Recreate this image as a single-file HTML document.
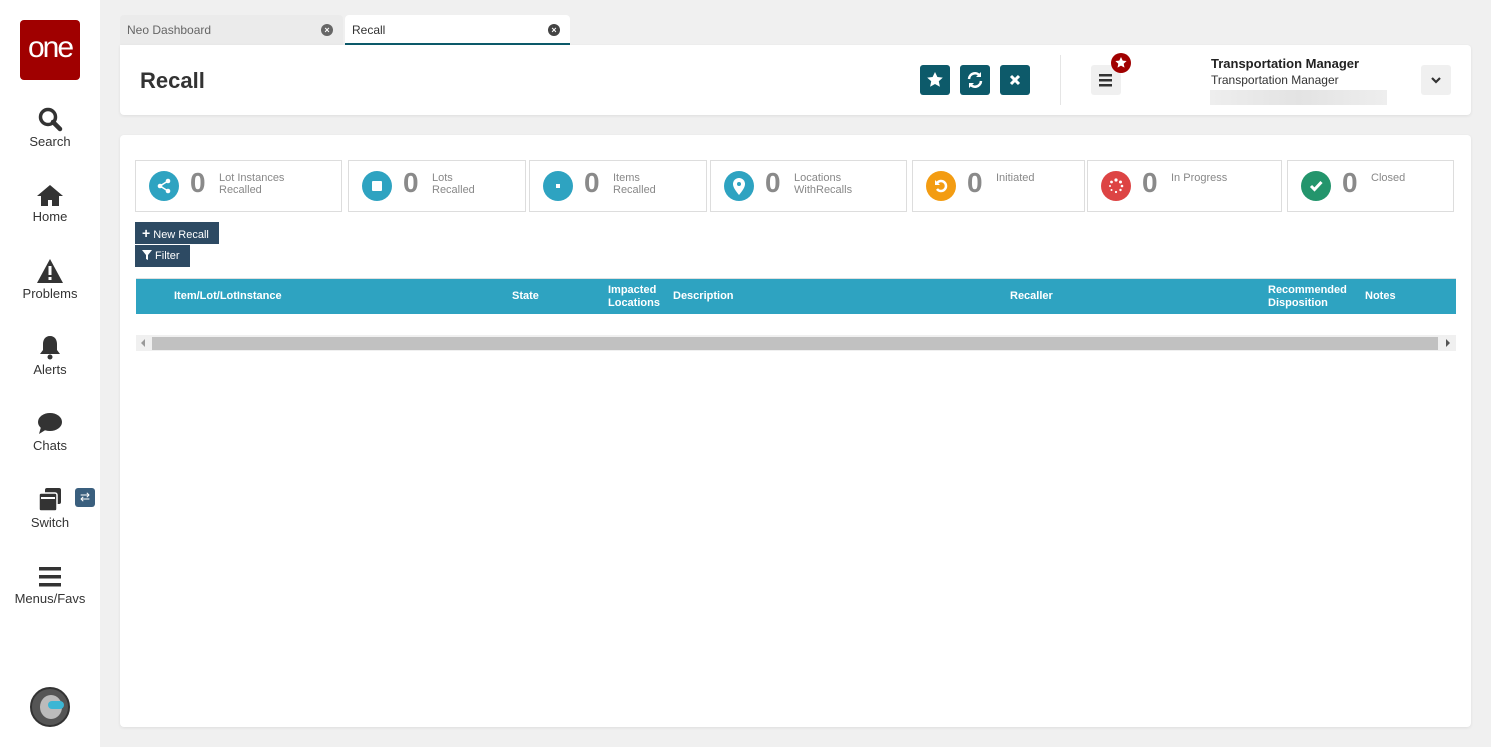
<!DOCTYPE html>
<html><head><style>
*{box-sizing:border-box;margin:0;padding:0}
body{width:1491px;height:747px;background:#f0f0f0;font-family:"Liberation Sans",sans-serif;position:relative;overflow:hidden;color:#333}
.abs{position:absolute}
#side{left:0;top:0;width:100px;height:747px;background:#fff}
.logo{left:20px;top:20px;width:60px;height:60px;background:#a00000;border-radius:4px;color:#fff;font-size:30px;text-align:center;line-height:56px;letter-spacing:-2px}
.nav{left:0;width:100px;text-align:center;font-size:13px;color:#333}
.nav svg{display:block;margin:0 auto 2px}
.tab{top:15px;height:30px;font-size:12px;line-height:30px;padding-left:7px;border-radius:4px 4px 0 0}
.x{position:absolute;right:10px;top:9px;width:12px;height:12px;border-radius:50%;background:#444;color:#fff;font-size:9px;line-height:12px;text-align:center;font-weight:bold}
.card{background:#fff;border-radius:4px;box-shadow:0 1px 3px rgba(0,0,0,.08)}
.btn{width:30px;height:30px;background:#0d5a6a;border-radius:3px;top:65px}
.stat{top:160px;height:52px;border:1px solid #ddd;background:#fff}
.stat .c{position:absolute;left:13px;top:10px;width:30px;height:30px;border-radius:50%}
.stat .n{position:absolute;left:54px;top:6px;font-size:28px;font-weight:bold;color:#8a8a8a}
.stat .t{position:absolute;left:83px;top:11px;font-size:11px;color:#888;line-height:12px}
.th{position:absolute;color:#fff;font-weight:bold;font-size:11px;line-height:13px}
</style></head><body>
<div id="side" class="abs"></div>
<div class="abs logo">one</div>
<div class="abs nav" style="top:106px"><svg width="26" height="26" viewBox="0 0 26 26"><circle cx="11" cy="11" r="7.5" fill="none" stroke="#333" stroke-width="3.5"/><path d="M16 16l7 7" stroke="#333" stroke-width="4.5" stroke-linecap="round"/></svg>Search</div>
<div class="abs nav" style="top:183px"><svg width="28" height="24" viewBox="0 0 28 24"><path d="M14 2L1 13h4v10h7v-6h4v6h7V13h4z" fill="#333"/></svg>Home</div>
<div class="abs nav" style="top:258px"><svg width="28" height="26" viewBox="0 0 28 26"><path d="M14 1L1 25h26z" fill="#333"/><rect x="12.5" y="8" width="3" height="9" fill="#fff"/><rect x="12.5" y="19" width="3" height="3" fill="#fff"/></svg>Problems</div>
<div class="abs nav" style="top:334px"><svg width="24" height="26" viewBox="0 0 24 26"><path d="M12 2c-5 0-7 4-7 8v6l-3 4h20l-3-4v-6c0-4-2-8-7-8z" fill="#333"/><circle cx="12" cy="23" r="2.5" fill="#333"/></svg>Alerts</div>
<div class="abs nav" style="top:412px"><svg width="28" height="24" viewBox="0 0 28 24"><ellipse cx="14" cy="10" rx="12" ry="9" fill="#333"/><path d="M5 15l-2 7 8-5z" fill="#333"/></svg>Chats</div>
<div class="abs nav" style="top:487px"><svg width="28" height="26" viewBox="0 0 28 26"><rect x="9" y="1" width="16" height="16" rx="2" fill="#333"/><rect x="3" y="6" width="18" height="18" rx="2" fill="#333" stroke="#fff" stroke-width="1.5"/><rect x="5" y="10" width="14" height="2" fill="#fff"/></svg>Switch</div>
<div class="abs" style="left:75px;top:488px;width:20px;height:19px;background:#3a5f7e;border-radius:3px;color:#fff;font-size:12px;text-align:center;line-height:19px">⇄</div>
<div class="abs nav" style="top:565px"><svg width="24" height="24" viewBox="0 0 24 24"><rect x="1" y="2" width="22" height="3.5" fill="#333"/><rect x="1" y="10" width="22" height="3.5" fill="#333"/><rect x="1" y="18" width="22" height="3.5" fill="#333"/></svg>Menus/Favs</div>
<div class="abs" style="left:30px;top:687px;width:40px;height:40px;border-radius:50%;background:#555;border:2px solid #333"><div style="position:absolute;left:8px;top:6px;width:22px;height:24px;border-radius:50%;background:#bbb"></div><div style="position:absolute;left:16px;top:12px;width:16px;height:8px;background:#3bb6d4;border-radius:4px"></div></div>

<div class="abs tab" style="left:120px;width:223px;background:#ebebeb;color:#666">Neo Dashboard<span class="x" style="background:#666">×</span></div>
<div class="abs tab" style="left:345px;width:225px;background:#fff;color:#333;border-bottom:2px solid #0d5a6a">Recall<span class="x">×</span></div>

<div class="abs card" style="left:120px;top:45px;width:1351px;height:70px;border-radius:0 4px 4px 4px"></div>
<div class="abs" style="left:140px;top:68px;font-size:22px;font-weight:bold;color:#333">Recall</div>
<div class="abs btn" style="left:920px"><svg width="30" height="30" viewBox="0 0 30 30"><path d="M15 7l2.4 5 5.4.6-4 3.7 1.1 5.4L15 19l-4.9 2.7 1.1-5.4-4-3.7 5.4-.6z" fill="#fff"/></svg></div>
<div class="abs btn" style="left:960px"><svg width="30" height="30" viewBox="0 0 30 30"><path d="M9 14a6 6 0 0 1 11-3M21 16a6 6 0 0 1-11 3" fill="none" stroke="#fff" stroke-width="2.5"/><path d="M21 7v5h-5zM9 23v-5h5z" fill="#fff"/></svg></div>
<div class="abs btn" style="left:1000px"><svg width="30" height="30" viewBox="0 0 30 30"><path d="M11 11l8 8M19 11l-8 8" stroke="#fff" stroke-width="3"/></svg></div>
<div class="abs" style="left:1060px;top:55px;width:1px;height:50px;background:#e5e5e5"></div>
<div class="abs" style="left:1091px;top:65px;width:30px;height:30px;background:#f0f0f0;border-radius:3px"><svg width="30" height="30" viewBox="0 0 30 30"><rect x="8" y="9" width="13" height="2.5" fill="#333"/><rect x="8" y="14" width="13" height="2.5" fill="#333"/><rect x="8" y="19" width="13" height="2.5" fill="#333"/></svg></div>
<div class="abs" style="left:1111px;top:53px;width:20px;height:20px;border-radius:50%;background:#a00000"><svg width="20" height="20" viewBox="0 0 20 20"><path d="M10 4l1.7 3.6 3.9.4-2.9 2.7.8 3.9L10 12.6l-3.5 2 .8-3.9L4.4 8l3.9-.4z" fill="#fff"/></svg></div>
<div class="abs" style="left:1211px;top:56px;font-size:13px;font-weight:bold;color:#222">Transportation Manager</div>
<div class="abs" style="left:1211px;top:73px;font-size:12px;color:#333">Transportation Manager</div>
<div class="abs" style="left:1210px;top:90px;width:177px;height:15px;background:linear-gradient(90deg,#eee,#e3e3e3 50%,#eee)"></div>
<div class="abs" style="left:1421px;top:65px;width:30px;height:30px;background:#f0f0f0;border-radius:3px"><svg width="30" height="30" viewBox="0 0 30 30"><path d="M11 13l4 4 4-4" fill="none" stroke="#333" stroke-width="2.2"/></svg></div>

<div class="abs card" style="left:120px;top:135px;width:1351px;height:592px"></div>

<div class="abs stat" style="left:135px;width:207px"><div class="c" style="background:#2ea3c1"><svg width="30" height="30" viewBox="0 0 30 30"><circle cx="19" cy="10" r="2.3" fill="#fff"/><circle cx="11" cy="15" r="2.3" fill="#fff"/><circle cx="19" cy="20" r="2.3" fill="#fff"/><path d="M19 10l-8 5 8 5" stroke="#fff" stroke-width="1.5" fill="none"/></svg></div><div class="n">0</div><div class="t">Lot Instances<br>Recalled</div></div>
<div class="abs stat" style="left:348px;width:178px"><div class="c" style="background:#2ea3c1"><div style="position:absolute;left:10px;top:10px;width:10px;height:10px;background:#fff;border-radius:1px"></div></div><div class="n">0</div><div class="t">Lots<br>Recalled</div></div>
<div class="abs stat" style="left:529px;width:178px"><div class="c" style="background:#2ea3c1"><div style="position:absolute;left:13px;top:13px;width:4px;height:4px;background:#fff"></div></div><div class="n">0</div><div class="t">Items<br>Recalled</div></div>
<div class="abs stat" style="left:710px;width:197px"><div class="c" style="background:#2ea3c1"><svg width="30" height="30" viewBox="0 0 30 30"><path d="M15 24c-4-5-6-8-6-11a6 6 0 0 1 12 0c0 3-2 6-6 11z" fill="#fff"/><circle cx="15" cy="13" r="2" fill="#2ea3c1"/></svg></div><div class="n">0</div><div class="t">Locations<br>WithRecalls</div></div>
<div class="abs stat" style="left:912px;width:173px"><div class="c" style="background:#f39c12"><svg width="30" height="30" viewBox="0 0 30 30"><path d="M11 12a5 5 0 1 1 0 6" fill="none" stroke="#fff" stroke-width="2.5"/><path d="M9 9v5h5z" fill="#fff"/></svg></div><div class="n">0</div><div class="t">Initiated</div></div>
<div class="abs stat" style="left:1087px;width:195px"><div class="c" style="background:#dd4444"><svg width="30" height="30" viewBox="0 0 30 30"><g fill="#fff"><circle cx="15" cy="9" r="1.6"/><circle cx="19.5" cy="11" r="1.5"/><circle cx="21" cy="15" r="1.3"/><circle cx="19.5" cy="19" r="1.2"/><circle cx="15" cy="21" r="1.1"/><circle cx="10.5" cy="19" r="1"/><circle cx="9" cy="15" r="1"/><circle cx="10.5" cy="11" r="1.4"/></g></svg></div><div class="n">0</div><div class="t">In Progress</div></div>
<div class="abs stat" style="left:1287px;width:167px"><div class="c" style="background:#23956c"><svg width="30" height="30" viewBox="0 0 30 30"><path d="M10 15l3.5 3.5L20.5 11" fill="none" stroke="#fff" stroke-width="3"/></svg></div><div class="n">0</div><div class="t">Closed</div></div>

<div class="abs" style="left:135px;top:222px;width:84px;height:22px;background:#2d4a63;color:#fff;font-size:11px;line-height:22px;padding-left:7px"><b style="font-size:14px">+</b> New Recall</div>
<div class="abs" style="left:135px;top:245px;width:55px;height:22px;background:#2d4a63;color:#fff;font-size:11px;line-height:22px;padding-left:7px"><svg width="10" height="10" viewBox="0 0 10 10" style="vertical-align:-1px"><path d="M0 0h10L6 5v5L4 9V5z" fill="#fff"/></svg> Filter</div>

<div class="abs" style="left:136px;top:278px;width:1320px;height:36px;background:#2ea3c1;border-top:1px solid #e0e0e0"></div>
<div class="th" style="left:174px;top:290px">Item/Lot/LotInstance</div>
<div class="th" style="left:512px;top:290px">State</div>
<div class="th" style="left:608px;top:284px">Impacted<br>Locations</div>
<div class="th" style="left:673px;top:290px">Description</div>
<div class="th" style="left:1010px;top:290px">Recaller</div>
<div class="th" style="left:1268px;top:284px">Recommended<br>Disposition</div>
<div class="th" style="left:1365px;top:290px">Notes</div>

<div class="abs" style="left:136px;top:335px;width:1320px;height:16px;background:#f0f0f0"></div>
<div class="abs" style="left:152px;top:337px;width:1286px;height:13px;background:#c1c1c1"></div>
<div class="abs" style="left:141px;top:339px;width:0;height:0;border:4px solid transparent;border-right-color:#999;border-left:0"></div>
<div class="abs" style="left:1446px;top:339px;width:0;height:0;border:4px solid transparent;border-left-color:#555;border-right:0"></div>
</body></html>
